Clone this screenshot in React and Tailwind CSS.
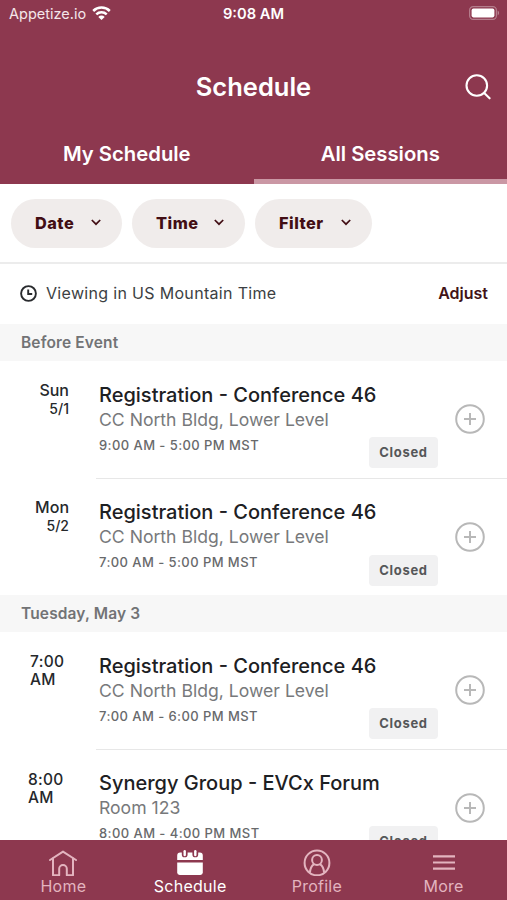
/**
 * App.jsx — mobile schedule screen: header tabs, filters, session list, bottom nav
 */

const FILTERS = [
  { label: 'Date',   width: 'w-[111px]', text: 'w-[39px]' },
  { label: 'Time',   width: 'w-[113px]', text: 'w-[41px]' },
  { label: 'Filter', width: 'w-[117px]', text: 'w-[45px]' },
];

const SECTIONS = [
  {
    heading: 'Before Event',
    sessions: [
      { day: 'Sun', date: '5/1', title: 'Registration - Conference 46', place: 'CC North Bldg, Lower Level', time: '9:00 AM - 5:00 PM MST' },
      { day: 'Mon', date: '5/2', title: 'Registration - Conference 46', place: 'CC North Bldg, Lower Level', time: '7:00 AM - 5:00 PM MST' },
    ],
  },
  {
    heading: 'Tuesday, May 3',
    sessions: [
      { hour: '7:00', indent: 'pl-[30px]', title: 'Registration - Conference 46', place: 'CC North Bldg, Lower Level', time: '7:00 AM - 6:00 PM MST' },
      { hour: '8:00', indent: 'pl-[28px]', title: 'Synergy Group - EVCx Forum', place: 'Room 123', time: '8:00 AM - 4:00 PM MST' },
    ],
  },
];

function WifiIcon() {
  return (
    <svg className="w-[19px] h-[14px] -mt-[2px]" viewBox="0 0 19 14" fill="none" stroke="white" strokeWidth="2.5">
      <path d="M1.2 5a11.8 11.8 0 0 1 16.6 0" />
      <path d="M4.3 8.3a7.4 7.4 0 0 1 10.4 0" />
      <path d="M9.5 14 6.3 10.9a4.5 4.5 0 0 1 6.4 0Z" fill="white" stroke="none" />
    </svg>
  );
}

function BatteryIcon() {
  return (
    <svg className="w-[31px] h-[14px] -mt-px" viewBox="0 0 31 14" fill="none">
      <rect x="0.6" y="0.6" width="26.8" height="12.8" rx="3.6" stroke="white" strokeOpacity="0.35" strokeWidth="1.2" />
      <rect x="2.6" y="2.6" width="22.8" height="8.8" rx="1.8" fill="white" />
      <path d="M28.7 4.6c1.8.8 1.8 4 0 4.8Z" fill="white" fillOpacity="0.4" />
    </svg>
  );
}

function HomeIcon() {
  return (
    <svg className="w-7 h-[27px]" viewBox="0 0 28 27" fill="none" stroke="currentColor" strokeWidth="2" strokeLinejoin="round" strokeLinecap="round">
      <path d="M1 11 14 2.6 27 11" />
      <path d="M4 9.4v16.8h6.2v-6.4a3.8 3.8 0 0 1 7.6 0v6.4H24V9.4" />
    </svg>
  );
}

function CalendarIcon() {
  return (
    <svg className="w-7 h-[27px]" viewBox="0 0 28 27" fill="currentColor">
      <path d="M1.2 11V6.4a3 3 0 0 1 3-3h1.6v2a2.9 2.9 0 0 0 5.8 0v-2h4.8v2a2.9 2.9 0 0 0 5.8 0v-2h1.6a3 3 0 0 1 3 3V11Z" />
      <path d="M1.2 13.4h25.6v10.2a2.4 2.4 0 0 1-2.4 2.4H3.6a2.4 2.4 0 0 1-2.400-2.400Z" />
      <rect x="7.5" y="1" width="2.4" height="6.2" rx="1.2" />
      <rect x="18.1" y="1" width="2.4" height="6.2" rx="1.2" />
    </svg>
  );
}

function ProfileIcon() {
  return (
    <svg className="w-7 h-[27px]" viewBox="0 0 28 27" fill="none" stroke="currentColor" strokeWidth="2">
      <circle cx="14" cy="13.9" r="12.4" />
      <circle cx="14" cy="11" r="4.9" />
      <path d="M6.900 23.800c.3-4.800 2-7.300 4.200-8.700M21.100 23.800c-.3-4.800-2-7.300-4.200-8.700" />
    </svg>
  );
}

function MenuIcon() {
  return (
    <svg className="w-7 h-[27px]" viewBox="0 0 28 27" fill="none" stroke="currentColor" strokeWidth="2.2">
      <path d="M3 7.4h22M3 13.5h22M3 19.7h22" />
    </svg>
  );
}

const NAV = [
  { label: 'Home',     Icon: HomeIcon },
  { label: 'Schedule', Icon: CalendarIcon, active: true },
  { label: 'Profile',  Icon: ProfileIcon },
  { label: 'More',     Icon: MenuIcon },
];

function SessionRow({ session, last }) {
  const { day, date, hour, indent, title, place, time } = session;

  return (
    <div className={`flex shrink-0 ${last ? 'h-[116.3px]' : 'h-[117.4px]'}`}>
      {day ? (
        <div className="w-24 shrink-0 pt-[19.5px] pr-[27px] text-right font-medium text-[#25282b]">
          <p className="text-[16px] leading-[19px]">{day}</p>
          <p className="text-[14px] leading-[17px]">{date}</p>
        </div>
      ) : (
        <div className={`w-24 shrink-0 pt-[21px] font-medium text-[15.5px] tracking-[0.3px] leading-[18px] text-[#25282b] ${indent}`}>
          <p>{hour}</p>
          <p>AM</p>
        </div>
      )}

      <div className={`flex flex-1 pl-[3px] ${last ? '' : 'border-b border-[#e7e7e7]'}`}>
        <div className="w-[270px] pt-[20.5px] whitespace-nowrap">
          <h3 className="text-[20px] leading-[26px] font-medium text-[#1d2023]">{title}</h3>
          <p className="text-[17.6px] leading-[24px] text-[#77797b]">{place}</p>
          <p className="text-[13px] leading-[27px] tracking-[0.43px] font-medium text-[#68696b]">{time}</p>
        </div>
        <span className="mt-[76px] w-[69px] h-[31px] rounded-[4px] bg-[#f1f1f2] text-center text-[13px] tracking-[0.7px] leading-[31px] font-bold text-[#555759]">
          Closed
        </span>
        <svg className="w-[30px] h-[30px] mt-[43px] ml-[17px]" viewBox="0 0 30 30" fill="none" stroke="#b8b8b8" strokeWidth="2">
          <circle cx="15" cy="15" r="13.8" />
          <path d="M15 9v12M9 15h12" />
        </svg>
      </div>
    </div>
  );
}

export default function App() {
  return (
    <div className="flex flex-col w-[507px] h-[900px] overflow-hidden bg-white font-['Inter','Liberation_Sans',sans-serif]">
      <header className="shrink-0 flex flex-col h-[184px] bg-[#8d384f] text-white">
        <div className="grid grid-cols-3 items-center h-[27px] pl-[9px] pr-[7px]">
          <div className="flex items-center gap-[6px] text-[14.5px]">
            <span className="text-[#f4e6ea]">Appetize.io</span>
            <WifiIcon />
          </div>
          <span className="pt-px pr-[2px] text-center text-[14.7px] font-semibold">9:08 AM</span>
          <div className="flex justify-end"><BatteryIcon /></div>
        </div>

        <div className="grid grid-cols-[1fr_auto_1fr] items-center h-[120px] px-4">
          <span />
          <h1 className="text-[25.5px] font-semibold">Schedule</h1>
          <svg className="justify-self-end w-[26px] h-[26px]" viewBox="0 0 26 26" fill="none" stroke="white" strokeWidth="2.1" strokeLinecap="round">
            <circle cx="11.8" cy="11.5" r="10.3" />
            <path d="m19.2 18.9 5.4 5.4" />
          </svg>
        </div>

        <div className="grid grid-cols-2 flex-1 text-[20.3px] font-semibold text-center leading-[14px]">
          <span>My Schedule</span>
          <span className="border-b-[5px] border-[#ca97a4]">All Sessions</span>
        </div>
      </header>

      <div className="shrink-0 flex items-start gap-[10px] h-[80px] pt-[15px] pl-[11px] border-b-2 border-[#ececec]">
        {FILTERS.map(({ label, width, text }) => (
          <button key={label} className={`flex items-center h-[49px] pl-[24px] pb-px rounded-full bg-[#f0eceb] text-[#420e14] ${width}`}>
            <span className={`text-left text-[16.3px] tracking-[0.5px] font-extrabold whitespace-nowrap ${text}`}>{label}</span>
            <svg className="w-[10px] h-[7px] ml-[17px] -mt-px" viewBox="0 0 10 7" fill="none" stroke="currentColor" strokeWidth="1.7">
              <path d="m.8 1 4.2 4.2L9.2 1" />
            </svg>
          </button>
        ))}
      </div>

      <div className="shrink-0 flex items-center h-[60px] pl-5 pr-[19px] pb-[2px] text-[16px]">
        <svg className="w-[17px] h-[17px]" viewBox="0 0 17 17" fill="none" stroke="#292b2e" strokeWidth="1.9">
          <circle cx="8.5" cy="8.5" r="7.4" />
          <path d="M8.2 4.4v4.600h4" />
        </svg>
        <span className="ml-[9px] tracking-[0.32px] text-[#3c3f43]">Viewing in US Mountain Time</span>
        <button className="ml-auto font-semibold text-[#421317]">Adjust</button>
      </div>

      <main className="flex flex-col flex-1 overflow-hidden">
        {SECTIONS.map(({ heading, sessions }) => (
          <section key={heading} className="shrink-0">
            <h2 className="h-[37.4px] pl-[21px] bg-[#f7f7f7] text-[15.5px] tracking-[0.13px] leading-[37px] font-semibold text-[#727375]">{heading}</h2>
            {sessions.map((session, i) => (
              <SessionRow key={session.time} session={session} last={i === sessions.length - 1} />
            ))}
          </section>
        ))}
      </main>

      <nav className="shrink-0 grid grid-cols-4 h-[60px] pt-[9px] bg-[#8d384f]">
        {NAV.map(({ label, Icon, active }) => (
          <a key={label} className={`flex flex-col items-center text-[16px] tracking-[0.25px] leading-[20px] ${active ? 'text-white' : 'text-[#e3b4bf]'}`}>
            <Icon />
            <span>{label}</span>
          </a>
        ))}
      </nav>
    </div>
  );
}
